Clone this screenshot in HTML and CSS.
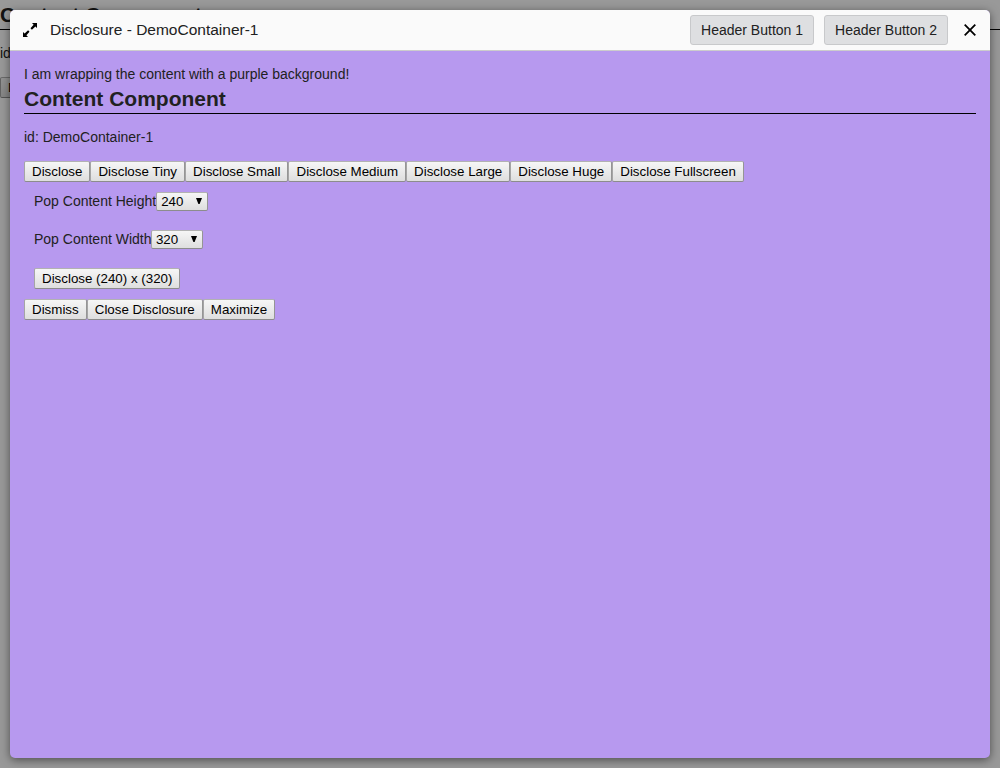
FILE: index.html
```
<!DOCTYPE html>
<html lang="en">
<head>
<meta charset="utf-8">
<title>Disclosure</title>
<link rel="stylesheet" href="styles.css">
</head>
<body>
<main class="page">
  <h2 class="heading">Content Component</h2>
  <p class="ident">id: root</p>
  <div class="row"><button class="btn">Disclose</button></div>
</main>
<div class="overlay">
  <section class="dialog">
    <header class="bar">
      <svg class="expand" width="14" height="14" viewBox="0 0 14 14"><path d="M9 0H14V5L12.4 3.6 8.9 6.7 7.5 5.3 10.6 1.8ZM0 9 1.6 10.4 5.1 7.3 6.5 8.7 3.4 12.2 5 14H0Z"/></svg>
      <span class="title">Disclosure - DemoContainer-1</span>
      <button class="header-btn">Header Button 1</button>
      <button class="header-btn">Header Button 2</button>
      <svg class="close" width="12" height="12" viewBox="0 0 12 12"><path d="M.7 .7 11.3 11.3M11.3 .7 .7 11.3"/></svg>
    </header>
    <div class="content">
      <div class="intro">I am wrapping the content with a purple background!</div>
      <h2 class="heading">Content Component</h2>
      <p class="ident">id: DemoContainer-1</p>
      <div class="row">
        <button class="btn">Disclose</button><button class="btn">Disclose Tiny</button><button class="btn">Disclose Small</button><button class="btn">Disclose Medium</button><button class="btn">Disclose Large</button><button class="btn">Disclose Huge</button><button class="btn">Disclose Fullscreen</button>
      </div>
      <div class="options">
        <div class="field"><span>Pop Content Height</span><span class="select">240<svg width="6" height="6" viewBox="0 0 6 6"><path d="M0 0H6L3.6 6H2.4Z"/></svg></span></div>
        <div class="field"><span class="width-label">Pop Content Width</span><span class="select">320<svg width="6" height="6" viewBox="0 0 6 6"><path d="M0 0H6L3.6 6H2.4Z"/></svg></span></div>
        <div class="row"><button class="btn">Disclose (240) x (320)</button></div>
      </div>
      <div class="row">
        <button class="btn">Dismiss</button><button class="btn">Close Disclosure</button><button class="btn">Maximize</button>
      </div>
    </div>
  </section>
</div>
</body>
</html>
```
FILE: styles.css
```
* { box-sizing: border-box; }
body {
  margin: 0;
  height: 768px;
  overflow: hidden;
  background: #fff;
  color: #212121;
  font: 14px/18px "Liberation Sans", Arial, sans-serif;
}
.heading {
  margin: 0;
  height: 30px;
  border-bottom: 1px solid #000;
  font-size: 21px;
  line-height: 30px;
}
.ident { margin: 14px 0 15px; }
.row { display: flex; height: 21px; }
.btn {
  height: 21px;
  padding: 0 7.04px;
  border: 1px solid;
  border-color: #b2b2b2 #959595 #8c8c8c #a5a5a5;
  border-radius: 2px;
  background: linear-gradient(#f6f6f6, #dedede);
  color: #000;
  font: 13.3333px/18px "Liberation Sans", Arial, sans-serif;
  white-space: nowrap;
}
.overlay {
  position: absolute;
  inset: 0;
  padding: 10px;
  background: rgba(0, 0, 0, 0.4);
}
.dialog {
  height: 748px;
  overflow: hidden;
  border-radius: 5px;
  background: #b799ef;
  box-shadow: 0 2px 10px rgba(0, 0, 0, 0.5);
}
.bar {
  display: flex;
  align-items: center;
  height: 41px;
  padding: 0 14px 0 13px;
  border-bottom: 1px solid #ccc;
  background: #fafafa;
}
.expand { margin-right: 13px; fill: #000; }
.title { flex: 1; font-size: 15.5px; }
.header-btn {
  height: 30px;
  margin-right: 10px;
  padding: 0 10px;
  border: 1px solid #c8c9cb;
  border-radius: 3px;
  background: #dedfe1;
  color: #212121;
  font: 14px/28px "Liberation Sans", Arial, sans-serif;
}
.close {
  margin-left: 6px;
  fill: none;
  stroke: #000;
  stroke-width: 1.8;
}
.content { padding: 14px; }
.intro { height: 19px; }
.options { padding: 10px; }
.field { display: flex; height: 19px; margin-bottom: 19px; }
.width-label { margin-right: -0.6px; }
.select {
  display: flex;
  justify-content: space-between;
  width: 52px;
  height: 19px;
  padding: 0 5px 0 4px;
  border: 1px solid;
  border-color: #b2b2b2 #959595 #8c8c8c #a5a5a5;
  border-radius: 2px;
  background: linear-gradient(#f6f6f6, #dedede);
  color: #000;
  font-size: 13.3333px;
}
.select svg { margin-top: 5px; }
```
